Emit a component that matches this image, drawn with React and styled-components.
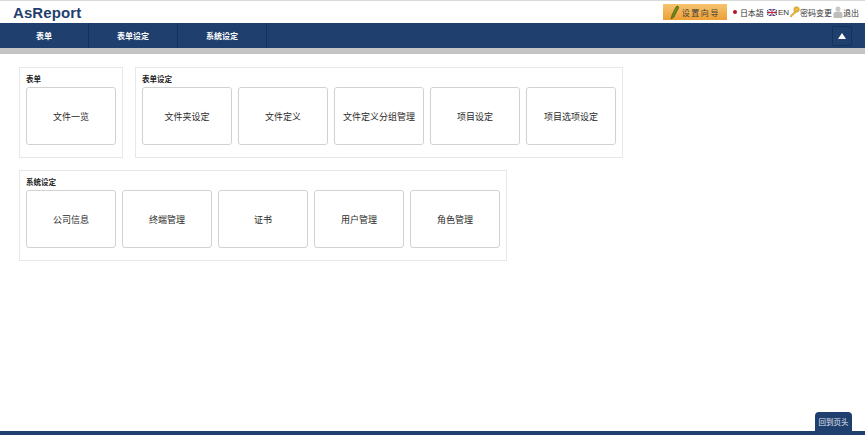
import styled, { createGlobalStyle } from "styled-components";

const GlobalStyle = createGlobalStyle`
  html, body {
    margin: 0;
    padding: 0;
    background-color: #fff;
    font-family: "Liberation Sans", "Noto Sans CJK SC", sans-serif;
  }
`;

const Page = styled.div`
  position: relative;
  display: flex;
  flex-direction: column;
  width: 865px;
  height: 435px;
  overflow: hidden;
  background-color: #fff;
`;
const Header = styled.header`
  display: flex;
  align-items: center;
  justify-content: space-between;
  height: 22px;
  padding: 0 6px 0 13px;
  border-top: 1px solid #d9d9d9;
`;
const Logo = styled.div`
  color: #1f3f6e;
  font-size: 15px;
  font-weight: 700;
  letter-spacing: 0.1px;
`;
const HeaderTools = styled.div`
  display: flex;
  align-items: center;
  font-size: 8px;
  color: #333;
`;
const WizardButton = styled.div`
  display: flex;
  align-items: center;
  justify-content: center;
  gap: 2px;
  width: 64px;
  height: 16px;
  margin-right: 6px;
  background: linear-gradient(#f6c46f, #ee9f35);
  color: #3c3c3c;
  font-size: 8px;
  letter-spacing: 1.6px;
`;
const Tool = styled.span`
  display: flex;
  align-items: center;
  gap: ${(props) => props.gap || 0}px;
  margin-left: ${(props) => props.offset || 0}px;
`;
const LangDot = styled.i`
  width: 4px;
  height: 4px;
  border-radius: 50%;
  background-color: #b3142c;
`;
const NavBar = styled.nav`
  display: flex;
  align-items: stretch;
  justify-content: space-between;
  height: 25px;
  background-color: #1f3f6e;
`;
const NavList = styled.div`
  display: flex;
`;
const NavItem = styled.div`
  display: flex;
  align-items: center;
  justify-content: center;
  width: 88px;
  border-right: 1px solid #163158;
  color: #fff;
  font-size: 8px;
  font-weight: 700;
`;
const CollapseButton = styled.div`
  display: flex;
  align-items: center;
  justify-content: center;
  width: 18px;
  height: 18px;
  margin: 3px 13px 0 0;
  border: 1px solid #17325a;
  border-radius: 2px;
`;
const Triangle = styled.i`
  width: 0;
  height: 0;
  border-left: 4px solid transparent;
  border-right: 4px solid transparent;
  border-bottom: 6px solid #fff;
`;
const GreyStrip = styled.div`
  height: 6px;
  background-color: #c4c4c4;
`;
const Content = styled.main`
  display: flex;
  flex-direction: column;
  gap: 12px;
  padding: 13px 0 0 19px;
`;
const Row = styled.div`
  display: flex;
  gap: 12px;
`;
const Group = styled.section`
  padding: 6px 6px 12px 6px;
  border: 1px solid #e8e8e8;
`;
const GroupTitle = styled.h2`
  margin: 0 0 2px;
  height: 11px;
  color: #222;
  font-size: 7.5px;
  line-height: 11px;
  font-weight: 700;
`;
const Tiles = styled.div`
  display: flex;
  gap: 6px;
`;
const Tile = styled.div`
  display: flex;
  align-items: center;
  justify-content: center;
  box-sizing: border-box;
  width: 90px;
  height: 58px;
  border: 1px solid #d2d2d2;
  border-radius: 3px;
  color: #2a2a2a;
  font-size: 9px;
`;
const BottomBar = styled.div`
  margin-top: auto;
  height: 4px;
  background-color: #1f3f6e;
`;
const BackToTop = styled.div`
  position: absolute;
  right: 13px;
  bottom: 4px;
  display: flex;
  align-items: center;
  justify-content: center;
  width: 37px;
  height: 19px;
  border-radius: 4px 4px 0 0;
  background-color: #1f3f6e;
  color: #e6ebf2;
  font-size: 7.5px;
`;

const groups = [
  [
    { title: "表单", items: ["文件一览"] },
    {
      title: "表单设定",
      items: ["文件夹设定", "文件定义", "文件定义分组管理", "项目设定", "项目选项设定"],
    },
  ],
  [
    {
      title: "系统设定",
      items: ["公司信息", "终端管理", "证书", "用户管理", "角色管理"],
    },
  ],
];

const PenIcon = () => (
  <svg width="10" height="15" viewBox="0 0 10 15">
    <path d="M7 1 C9 1 9 3 8 4 L4 12 L1 14 L2 10 L6 2 Z" fill="#6f8a1e" stroke="#3d4a10" strokeWidth="0.6" />
  </svg>
);

const FlagIcon = () => (
  <svg width="10" height="7" viewBox="0 0 10 7">
    <rect width="10" height="7" fill="#2b3f86" />
    <path d="M0 0 L10 7 M10 0 L0 7" stroke="#fff" strokeWidth="1.2" />
    <path d="M5 0 V7 M0 3.5 H10" stroke="#fff" strokeWidth="2.2" />
    <path d="M5 0 V7 M0 3.5 H10" stroke="#c8202f" strokeWidth="1.1" />
  </svg>
);

const KeyIcon = () => (
  <svg width="11" height="12" viewBox="0 0 11 12">
    <circle cx="7.5" cy="3.5" r="2.8" fill="#e9b93a" stroke="#b98a1c" strokeWidth="0.5" />
    <path d="M5.5 5.5 L1 10 L1.5 11 L3 10.5 L3.5 9.5 L4.5 9 L7 6.5 Z" fill="#e9b93a" stroke="#b98a1c" strokeWidth="0.4" />
  </svg>
);

const LogoutIcon = () => (
  <svg width="10" height="12" viewBox="0 0 10 12">
    <circle cx="5" cy="3" r="2.5" fill="#c9c9c9" />
    <path d="M0.5 12 V8 C0.5 6.3 2 5.5 5 5.5 C8 5.5 9.5 6.3 9.5 8 V12 Z" fill="#bdbdbd" />
  </svg>
);

const App = () => {
  return (
    <Page>
      <GlobalStyle />
      <Header>
        <Logo>AsReport</Logo>
        <HeaderTools>
          <WizardButton>
            <PenIcon />
            设置向导
          </WizardButton>
          <Tool gap={3}>
            <LangDot />
            日本語
          </Tool>
          <Tool offset={3} gap={1}>
            <FlagIcon />
            EN
          </Tool>
          <Tool gap={0}>
            <KeyIcon />
            密码变更
          </Tool>
          <Tool offset={1} gap={0}>
            <LogoutIcon />
            退出
          </Tool>
        </HeaderTools>
      </Header>
      <NavBar>
        <NavList>
          <NavItem>表单</NavItem>
          <NavItem>表单设定</NavItem>
          <NavItem>系统设定</NavItem>
        </NavList>
        <CollapseButton>
          <Triangle />
        </CollapseButton>
      </NavBar>
      <GreyStrip />
      <Content>
        {groups.map((row) => (
          <Row key={row[0].title}>
            {row.map((group) => (
              <Group key={group.title}>
                <GroupTitle>{group.title}</GroupTitle>
                <Tiles>
                  {group.items.map((item) => (
                    <Tile key={item}>{item}</Tile>
                  ))}
                </Tiles>
              </Group>
            ))}
          </Row>
        ))}
      </Content>
      <BottomBar />
      <BackToTop>回到页头</BackToTop>
    </Page>
  );
};

export default App;
